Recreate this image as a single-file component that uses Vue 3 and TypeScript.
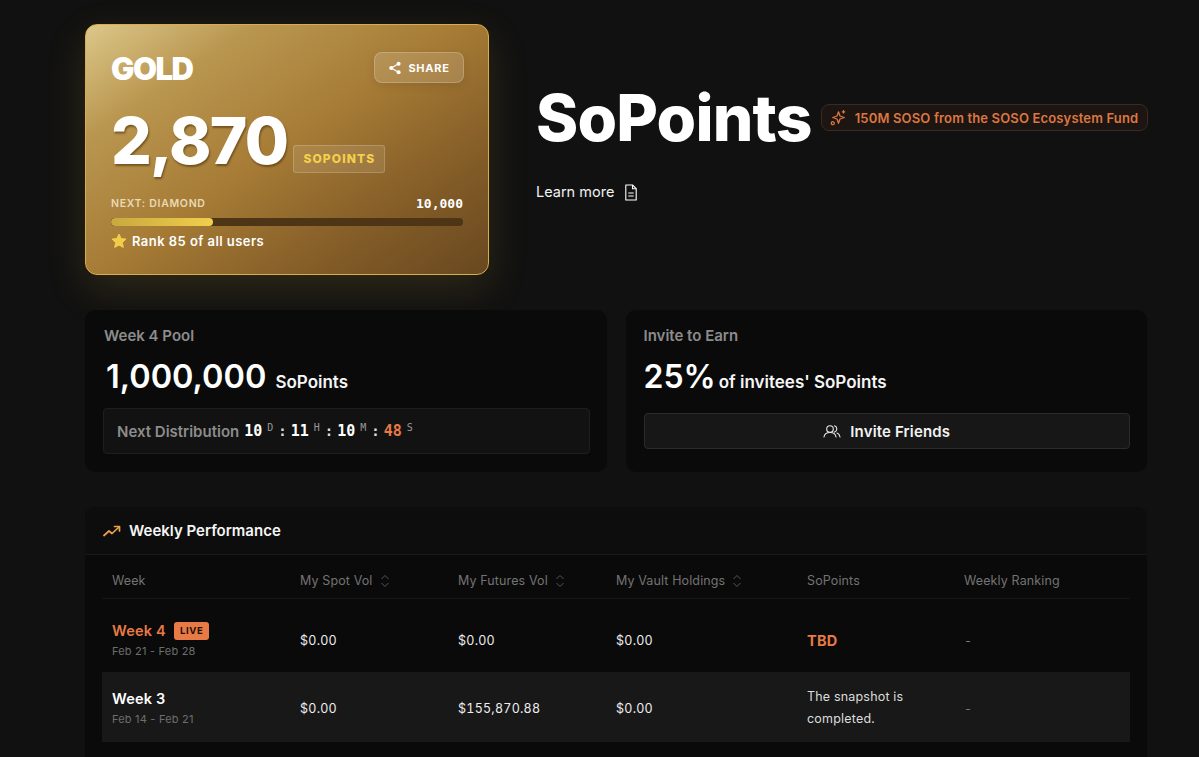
<script setup lang="ts">
interface Row {
  week: string
  date: string
  spot: string
  futures: string
  vault: string
  live: boolean
}
const rows: Row[] = [
  { week: 'Week 4', date: 'Feb 21 - Feb 28', spot: '$0.00', futures: '$0.00', vault: '$0.00', live: true },
  { week: 'Week 3', date: 'Feb 14 - Feb 21', spot: '$0.00', futures: '$155,870.88', vault: '$0.00', live: false },
]
const count = [
  { v: '10', u: 'D' },
  { v: '11', u: 'H' },
  { v: '10', u: 'M' },
  { v: '48', u: 'S' },
]
const progress = 28.9
</script>

<template>
  <main class="page">
    <section class="hero">
      <div class="gold">
        <div class="gold-top">
          <div class="tier">GOLD</div>
          <button class="share">
            <svg width="14" height="14" viewBox="0 0 14 14" fill="#fff">
              <circle cx="10.6" cy="2.8" r="2" />
              <circle cx="3.2" cy="7" r="2" />
              <circle cx="10.6" cy="11.2" r="2" />
              <path d="M3.2 7l7.4-4.2M3.2 7l7.4 4.2" stroke="#fff" stroke-width="1.2" />
            </svg>
            SHARE
          </button>
        </div>
        <div class="points-row">
          <div class="points">2,870</div>
          <div class="unit">SOPOINTS</div>
        </div>
        <div class="next">
          <span>NEXT: DIAMOND</span>
          <span class="goal">10,000</span>
        </div>
        <div class="track"><div class="fill" :style="{ width: progress + '%' }"></div></div>
        <div class="rank">
          <svg width="16" height="16" viewBox="0 0 16 16">
            <path d="M8 1l2.100 4.500 4.900.6-3.600 3.400.9 4.900L8 12.100 3.700 14.400l.9-4.900L1 6.100l4.900-.6z" fill="#f2cd4b" stroke="#f2cd4b" stroke-width="1" stroke-linejoin="round" />
          </svg>
          Rank 85 of all users
        </div>
      </div>

      <div class="intro">
        <div class="title-row">
          <h1>SoPoints</h1>
          <div class="fund">
            <svg width="16" height="16" viewBox="0 0 16 16" fill="none" stroke="#dc7742" stroke-width="1.300" stroke-linejoin="round" stroke-linecap="round">
              <path d="M8.500 1.800L10 6l4.300 1.500L10 9l-1.500 4.300L7 9 2.700 7.500 7 6z" />
              <path d="M13.500 .6v2.400M12.300 1.800h2.400" />
              <circle cx="2.800" cy="13.200" r="1.500" />
            </svg>
            150M SOSO from the SOSO Ecosystem Fund
          </div>
        </div>
        <div class="learn">
          Learn more
          <svg width="14" height="17" viewBox="0 0 14 17" fill="none" stroke="#fff" stroke-width="1.100" stroke-linejoin="round">
            <path d="M1.800 1h6.700l3.700 3.700V16H1.800z" />
            <path d="M8.500 1v3.700h3.700M4.300 9h5.400M4.300 12h5.400" />
          </svg>
        </div>
      </div>
    </section>

    <section class="stats">
      <div class="stat">
        <div class="stat-label">Week 4 Pool</div>
        <div class="stat-value pool"><span class="big">1,000,000</span><span class="small">SoPoints</span></div>
        <div class="countdown">
          <span class="cd-label">Next Distribution</span>
          <template v-for="(c, i) in count" :key="c.u">
            <span class="cd-num" :class="{ hot: c.u === 'S' }">{{ c.v }}</span>
            <sup class="cd-unit">{{ c.u }}</sup>
            <span v-if="i < count.length - 1" class="cd-sep">:</span>
          </template>
        </div>
      </div>
      <div class="stat">
        <div class="stat-label">Invite to Earn</div>
        <div class="stat-value invite"><span class="big">25%</span><span class="small">of invitees' SoPoints</span></div>
        <button class="invite-btn">
          <svg width="18" height="14" viewBox="0 0 18 14" fill="none" stroke="#e8e8e8" stroke-width="1.100" stroke-linecap="round">
            <circle cx="7" cy="5" r="3.300" />
            <path d="M1 13c.4-3 2.800-4.500 6-4.500s5.600 1.500 6 4.500M11.500 1.800a3.300 3.300 0 0 1 0 6.300M14 9c1.700.6 2.700 2 3 4" />
          </svg>
          Invite Friends
        </button>
      </div>
    </section>

    <section class="perf">
      <header class="perf-head">
        <svg width="18" height="12" viewBox="0 0 18 12" fill="none" stroke="#eda24a" stroke-width="1.700" stroke-linecap="round" stroke-linejoin="round">
          <path d="M1 10.500l5-4.500 3 2.500 7-6.500" />
          <path d="M11.500 1.500H16.500V6" />
        </svg>
        Weekly Performance
      </header>
      <div class="table">
        <div class="tr th">
          <div>Week</div>
          <div class="sort">My Spot Vol
            <svg width="10" height="14" viewBox="0 0 10 14" fill="none" stroke="#555" stroke-width="1"><path d="M1.500 5L5 1.500 8.500 5M1.500 9L5 12.500 8.500 9" /></svg>
          </div>
          <div class="sort">My Futures Vol
            <svg width="10" height="14" viewBox="0 0 10 14" fill="none" stroke="#555" stroke-width="1"><path d="M1.500 5L5 1.500 8.500 5M1.500 9L5 12.500 8.500 9" /></svg>
          </div>
          <div class="sort">My Vault Holdings
            <svg width="10" height="14" viewBox="0 0 10 14" fill="none" stroke="#555" stroke-width="1"><path d="M1.500 5L5 1.500 8.500 5M1.500 9L5 12.500 8.500 9" /></svg>
          </div>
          <div>SoPoints</div>
          <div>Weekly Ranking</div>
        </div>
        <div v-for="r in rows" :key="r.week" class="tr td" :class="{ alt: !r.live }">
          <div class="week-cell">
            <div class="week" :class="{ hot: r.live }">
              {{ r.week }}<span v-if="r.live" class="live">LIVE</span>
            </div>
            <div class="date">{{ r.date }}</div>
          </div>
          <div>{{ r.spot }}</div>
          <div>{{ r.futures }}</div>
          <div>{{ r.vault }}</div>
          <div v-if="r.live" class="tbd">TBD</div>
          <div v-else class="note">The snapshot is completed.</div>
          <div class="dash">-</div>
        </div>
      </div>
    </section>
  </main>
</template>

<style>
html, body {
  margin: 0;
  background: #111111;
  height: 757px;
  overflow: hidden;
}
</style>

<style scoped>
.page {
  box-sizing: border-box;
  width: 1199px;
  height: 757px;
  overflow: hidden;
  padding: 24px 52px 0 85px;
  background: #111111;
  color: #fff;
  font-family: Inter, "Noto Sans", sans-serif;
}
.hero {
  display: flex;
  gap: 47px;
}
.gold {
  box-sizing: border-box;
  width: 404px;
  height: 251px;
  flex: none;
  padding: 28px 25px 0;
  border: 1px solid #d9ad47;
  border-radius: 12px;
  background: linear-gradient(146deg, #dcc78a 0%, #b9964f 22%, #a57a35 50%, #835c27 76%, #694820 100%);
  box-shadow: 0 14px 40px rgba(202, 165, 60, 0.16);
}
.gold-top {
  display: flex;
  justify-content: space-between;
  align-items: flex-start;
}
.tier {
  font-size: 31px;
  line-height: 32px;
  font-weight: 900;
  letter-spacing: -1.5px;
  color: #fff;
}
.share {
  box-sizing: border-box;
  display: flex;
  align-items: center;
  justify-content: center;
  gap: 6px;
  width: 90px;
  height: 31px;
  margin: -1px -1px 0 0;
  border: 1px solid rgba(255, 255, 255, 0.2);
  border-radius: 8px;
  background: rgba(255, 255, 255, 0.14);
  box-shadow: 0 3px 10px rgba(0, 0, 0, 0.1);
  color: #fff;
  font: 700 11px Inter, sans-serif;
  letter-spacing: 0.7px;
}
.points-row {
  display: flex;
  align-items: flex-end;
  gap: 6px;
  margin-top: 21px;
}
.points {
  font-size: 64px;
  line-height: 70px;
  font-weight: 800;
  letter-spacing: -1.700px;
  color: #fff;
  text-shadow: 1px 2px 2px rgba(70, 40, 0, 0.55);
}
.unit {
  box-sizing: border-box;
  width: 92px;
  height: 28px;
  margin-bottom: 3px;
  border: 1px solid rgba(255, 255, 255, 0.18);
  border-radius: 3px;
  background: rgba(255, 255, 255, 0.1);
  color: #f4d04c;
  font-size: 12px;
  font-weight: 800;
  letter-spacing: 1.1px;
  line-height: 26px;
  text-align: center;
}
.next {
  display: flex;
  justify-content: space-between;
  align-items: center;
  margin-top: 19px;
  height: 16px;
  font-size: 10.500px;
  font-weight: 600;
  letter-spacing: 0.7px;
  color: #ead9b5;
}
.goal {
  font: 700 13px "DejaVu Sans Mono", monospace;
  letter-spacing: 0;
  color: #fff;
}
.track {
  height: 8px;
  margin-top: 7px;
  border-radius: 4px;
  background: #4d3516;
  overflow: hidden;
}
.fill {
  height: 100%;
  border-radius: 4px;
  background: linear-gradient(90deg, #c9a83f, #f0cf4c);
}
.rank {
  display: flex;
  align-items: center;
  gap: 5px;
  margin-top: 7px;
  font-size: 13px;
  font-weight: 600;
  letter-spacing: 0.45px;
  color: #fff;
}
.intro {
  flex: 1;
  min-width: 0;
  padding-top: 55px;
}
.title-row {
  display: flex;
  align-items: flex-start;
  gap: 9px;
}
h1 {
  margin: 0;
  font-size: 64px;
  line-height: 78px;
  font-weight: 800;
  letter-spacing: -0.8px;
  color: #fff;
}
.fund {
  box-sizing: border-box;
  display: flex;
  align-items: center;
  gap: 9px;
  height: 27px;
  margin-top: 25px;
  padding: 0 9px 0 8px;
  border: 1px solid #3b2a20;
  border-radius: 8px;
  background: #1c1512;
  color: #dc7742;
  font-size: 13px;
  font-weight: 600;
  letter-spacing: 0.15px;
  white-space: nowrap;
}
.learn {
  display: flex;
  align-items: center;
  gap: 10px;
  margin-top: 25px;
  font-size: 14.500px;
  line-height: 20px;
  color: #f2f2f2;
}
.stats {
  display: flex;
  gap: 19px;
  margin-top: 35px;
}
.stat {
  box-sizing: border-box;
  flex: 1;
  height: 162px;
  padding: 16px 17px 0 18px;
  border-radius: 10px;
  background: #0a0a0a;
}
.stat-label {
  font-size: 15px;
  line-height: 20px;
  font-weight: 600;
  color: #8c8c8c;
}
.stat:first-child .stat-label {
  margin-left: 1px;
}
.stat-value {
  display: flex;
  align-items: baseline;
  height: 41px;
  margin-top: 10px;
}
.pool { padding-left: 3px; gap: 9px; }
.invite { gap: 3px; }
.big {
  font-size: 32.500px;
  line-height: 41px;
  font-weight: 600;
  color: #fff;
}
.invite .big {
  font-size: 32px;
}
.small {
  font-size: 17px;
  font-weight: 600;
  color: #f5f5f5;
}
.countdown {
  box-sizing: border-box;
  display: flex;
  align-items: center;
  height: 46px;
  margin-top: 11px;
  padding: 0 13px;
  border: 1px solid #1e1e1e;
  border-radius: 4px;
  background: #121212;
}
.cd-label {
  margin-right: 5px;
  font-size: 15px;
  font-weight: 600;
  color: #8c8c8c;
}
.cd-num {
  font: 700 15px "DejaVu Sans Mono", monospace;
  color: #fff;
}
.cd-num.hot { color: #e87a45; }
.cd-unit {
  align-self: flex-start;
  margin: 14px 0 0 5px;
  font: 400 10px/10px "DejaVu Sans Mono", monospace;
  color: #999999;
}
.cd-sep {
  margin: 0 4px 0 5px;
  font: 700 14px "DejaVu Sans Mono", monospace;
  color: #ddd;
}
.invite-btn {
  box-sizing: border-box;
  display: flex;
  align-items: center;
  justify-content: center;
  gap: 9px;
  width: 100%;
  height: 36px;
  margin-top: 16px;
  border: 1px solid #2b2b2b;
  border-radius: 4px;
  background: #171717;
  color: #f2f2f2;
  font: 600 15px Inter, sans-serif;
  letter-spacing: 0.15px;
}
.perf {
  margin-top: 35px;
  height: 300px;
  border-radius: 10px 10px 0 0;
  background: #0a0a0a;
}
.perf-head {
  box-sizing: border-box;
  display: flex;
  align-items: center;
  gap: 8px;
  height: 48px;
  padding: 0 18px;
  border-bottom: 1px solid #1a1a1a;
  background: #0d0d0d;
  border-radius: 10px 10px 0 0;
  font-size: 15px;
  font-weight: 600;
  color: #f5f5f5;
}
.table {
  padding: 0 17px;
}
.tr {
  box-sizing: border-box;
  display: grid;
  grid-template-columns: 188px 158px 158px 191px 157px 1fr;
  align-items: center;
  padding-left: 10px;
}
.th {
  height: 44px;
  padding-top: 8px;
  border-bottom: 1px solid #161616;
  font-size: 12.500px;
  letter-spacing: 0.12px;
  color: #737373;
}
.sort {
  display: flex;
  align-items: center;
  gap: 7px;
}
.td {
  font-size: 12.500px;
  letter-spacing: 0.25px;
  font-variant-numeric: tabular-nums;
  color: #eeeeee;
}
.th + .td {
  height: 73px;
  padding-top: 9px;
}
.alt {
  height: 70px;
  padding-top: 2px;
  background: #181818;
}
.week-cell {
  display: flex;
  flex-direction: column;
  gap: 2px;
  margin-top: -1px;
}
.week {
  display: flex;
  align-items: center;
  gap: 8px;
  height: 20px;
  font-size: 14.500px;
  font-weight: 600;
  letter-spacing: 0.2px;
  font-variant-numeric: normal;
  color: #fff;
}
.week.hot { color: #e87a45; }
.live {
  box-sizing: border-box;
  height: 18px;
  padding: 0 6px;
  border-radius: 3px;
  background: #e87a45;
  color: #221008;
  font-size: 9.500px;
  font-weight: 700;
  letter-spacing: 0.6px;
  line-height: 18px;
}
.date {
  font-size: 11px;
  line-height: 16px;
  letter-spacing: 0.2px;
  font-variant-numeric: normal;
  color: #6e6e6e;
}
.tbd {
  font-size: 14.500px;
  font-weight: 700;
  color: #e87a45;
}
.note {
  width: 110px;
  line-height: 22px;
  letter-spacing: 0.2px;
  color: #dddddd;
}
.dash { color: #777; }
</style>
